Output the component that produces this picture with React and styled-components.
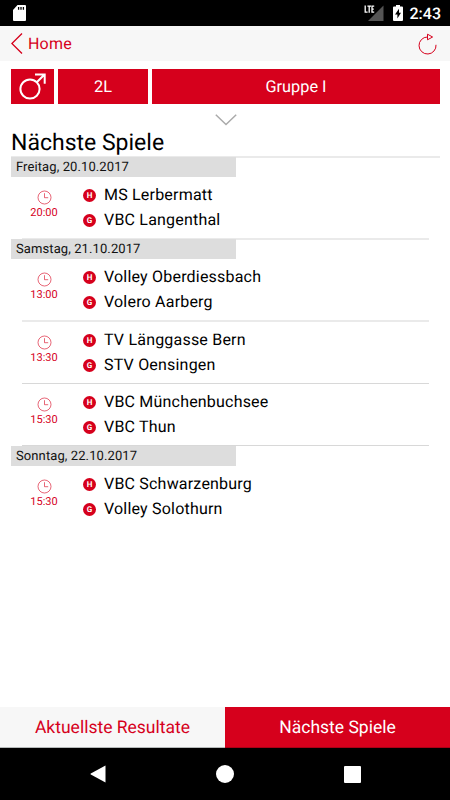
import React from "react";
import styled, { createGlobalStyle } from "styled-components";

const RED = "#d6001c";

const GlobalStyle = createGlobalStyle`
  * {
    box-sizing: border-box;
  }
  body {
    margin: 0;
    background: #fff;
    font-family: Roboto, sans-serif;
    text-rendering: geometricPrecision;
  }
`;

const Screen = styled.div`
  display: flex;
  flex-direction: column;
  width: 450px;
  height: 800px;
  overflow: hidden;
  color: #000;
  white-space: nowrap;
`;

const StatusBar = styled.div`
  display: flex;
  align-items: center;
  flex: none;
  height: 26px;
  padding: 0 9px 0 13px;
  background: #000;
  color: #fff;
  & .signal {
    margin-left: auto;
  }
  & .battery {
    margin: 0 7px 0 9px;
  }
  & .clock {
    font-size: 16px;
    font-weight: 500;
    line-height: 26px;
    padding-top: 2px;
  }
`;

const Header = styled.header`
  display: flex;
  align-items: center;
  justify-content: space-between;
  flex: none;
  height: 35px;
  padding: 0 12px 0 11px;
  background: #f7f7f7;
  color: ${RED};
`;

const BackLink = styled.div`
  display: flex;
  align-items: center;
  gap: 5px;
  font-size: 16px;
  letter-spacing: 0.2px;
`;

const Filters = styled.div`
  display: grid;
  grid-template-columns: 43px 90px 288px;
  gap: 4px;
  flex: none;
  height: 35px;
  margin: 8px 10px 0 11px;
`;

const FilterButton = styled.div`
  display: flex;
  align-items: center;
  justify-content: center;
  background: ${RED};
  color: #fff;
  font-size: 16.3px;
`;

const Expand = styled.div`
  display: flex;
  justify-content: center;
  flex: none;
  height: 24px;
  padding: 10px 0 0 1px;
`;

const Title = styled.h1`
  flex: none;
  height: 30px;
  margin: 0 10px 0 11px;
  border-bottom: 2px solid #eaeaea;
  font-size: 23px;
  font-weight: 400;
  line-height: 30px;
`;

const List = styled.main`
  flex: 1;
  padding: 0 11px;
`;

const DateBar = styled.div`
  position: relative;
  width: 225px;
  height: 20px;
  margin-top: ${({ $overlap }) => ($overlap ? -1 : 0)}px;
  padding-left: 5px;
  background: #ddd;
  color: #111;
  font-size: 13px;
  letter-spacing: 0.1px;
  line-height: 21px;
`;

const Match = styled.div`
  display: flex;
  height: ${({ $line }) => 61 + $line}px;
  margin: 0 10px 0 11px;
  border-bottom: ${({ $line }) => $line}px solid ${({ $line }) => ($line === 1 ? "#d8d8d8" : "#eaeaea")};
`;

const Kickoff = styled.div`
  display: flex;
  flex-direction: column;
  align-items: center;
  width: 44px;
  padding-top: 13px;
  color: ${RED};
  font-size: 11px;
  line-height: 14px;
  & svg {
    margin-bottom: 1px;
  }
`;

const Teams = styled.div`
  padding: 5px 0 0 17px;
`;

const Team = styled.div`
  display: flex;
  align-items: center;
  height: 25.3px;
  font-size: 16px;
  letter-spacing: 0.2px;
`;

const Badge = styled.span`
  display: flex;
  align-items: center;
  justify-content: center;
  width: 13px;
  height: 13px;
  margin: 1px 8px 0 0;
  border-radius: 50%;
  background: ${RED};
  color: #fff;
  font-size: 8px;
  font-weight: 700;
  letter-spacing: 0;
  line-height: 13px;
`;

const Tabs = styled.nav`
  display: grid;
  grid-template-columns: 1fr 1fr;
  flex: none;
  height: 41px;
`;

const Tab = styled.div`
  display: flex;
  align-items: center;
  justify-content: center;
  padding-top: 1px;
  background: ${({ $active }) => ($active ? RED : "#f7f7f7")};
  border-bottom: 1px solid ${({ $active }) => ($active ? "#a80016" : "#b5b9b9")};
  color: ${({ $active }) => ($active ? "#fff" : RED)};
  font-size: 17.5px;
`;

const SystemNav = styled.div`
  display: grid;
  grid-template-columns: 127px 127px 127px;
  justify-content: center;
  justify-items: center;
  align-items: center;
  flex: none;
  height: 52px;
  background: #000;
`;

const days = [
  {
    date: "Freitag, 20.10.2017",
    overlap: true,
    matches: [{ time: "20:00", home: "MS Lerbermatt", guest: "VBC Langenthal", line: 2 }],
  },
  {
    date: "Samstag, 21.10.2017",
    overlap: true,
    matches: [
      { time: "13:00", home: "Volley Oberdiessbach", guest: "Volero Aarberg", line: 2 },
      { time: "13:30", home: "TV Länggasse Bern", guest: "STV Oensingen", line: 1 },
      { time: "15:30", home: "VBC Münchenbuchsee", guest: "VBC Thun", line: 1 },
    ],
  },
  {
    date: "Sonntag, 22.10.2017",
    matches: [{ time: "15:30", home: "VBC Schwarzenburg", guest: "Volley Solothurn", line: 0 }],
  },
];

function ClockIcon() {
  return (
    <svg width="15" height="15" viewBox="0 0 15 15" fill="none" stroke={RED} strokeWidth="0.6">
      <circle cx="7.5" cy="7.5" r="6.5" />
      <path d="M7.5 3.2V7.7H11.2" />
    </svg>
  );
}

function MatchRow({ match }) {
  return (
    <Match $line={match.line}>
      <Kickoff>
        <ClockIcon />
        {match.time}
      </Kickoff>
      <Teams>
        <Team>
          <Badge>H</Badge>
          {match.home}
        </Team>
        <Team>
          <Badge>G</Badge>
          {match.guest}
        </Team>
      </Teams>
    </Match>
  );
}

export default function App() {
  return (
    <>
      <GlobalStyle />
      <Screen>
        <StatusBar>
          <svg width="13" height="16" viewBox="0 0 13 16">
            <path d="M4.5 0H12Q13 0 13 1V15Q13 16 12 16H1Q0 16 0 15V5Z" fill="#fff" />
            <path d="M5.6 2V4.8M8 2V4.8M10.4 2V4.8" stroke="#000" strokeWidth="1.3" />
          </svg>
          <svg className="signal" width="20" height="16" viewBox="0 0 20 16">
            <path d="M4 16L19.5 0.5V16Z" fill="#555" />
            <path d="M0 0H10.5V8.4H0Z" fill="#000" />
            <path
              d="M1.2 0.5V7.2H3.6M3.4 1.1H7M5.2 1V7.8M10.2 1.1H8V7.2H10.2M8 4.1H9.8"
              fill="none"
              stroke="#fff"
              strokeWidth="1.3"
            />
          </svg>
          <svg className="battery" width="10" height="16" viewBox="0 0 10 16">
            <path d="M3 0H7V1.6H9Q10 1.6 10 2.6V15Q10 16 9 16H1Q0 16 0 15V2.6Q0 1.6 1 1.6H3Z" fill="#fff" />
            <path d="M6 3.8L2 9.4H4.4V13.4L8 7.8H6Z" fill="#000" />
          </svg>
          <span className="clock">2:43</span>
        </StatusBar>
        <Header>
          <BackLink>
            <svg width="12" height="21" viewBox="0 0 12 21" fill="none" stroke={RED} strokeWidth="1.3">
              <path d="M11 0.5L0.9 10.5L11 20.5" />
            </svg>
            Home
          </BackLink>
          <svg width="20" height="22" viewBox="0 0 20 22" fill="none" stroke={RED} strokeWidth="1">
            <path d="M18 11.8A8.5 8.5 0 1 1 9.5 4" />
            <path d="M9.5 1.2V6.8L14.6 4Z" />
          </svg>
        </Header>
        <Filters>
          <FilterButton>
            <svg width="27" height="27" viewBox="0 0 27 27" fill="none" stroke="#fff" strokeWidth="2">
              <circle cx="11" cy="16" r="9.6" />
              <path d="M17.8 9.2L25.5 1.5M16 1.5H25.7V10.8" />
            </svg>
          </FilterButton>
          <FilterButton>2L</FilterButton>
          <FilterButton>Gruppe I</FilterButton>
        </Filters>
        <Expand>
          <svg width="22" height="12" viewBox="0 0 22 12" fill="none" stroke="#aaa" strokeWidth="1.5">
            <path d="M0.8 0.8L11 10.5L21.2 0.8" />
          </svg>
        </Expand>
        <Title>Nächste Spiele</Title>
        <List>
          {days.map((day) => (
            <section key={day.date}>
              <DateBar $overlap={day.overlap}>{day.date}</DateBar>
              {day.matches.map((match) => (
                <MatchRow key={match.home} match={match} />
              ))}
            </section>
          ))}
        </List>
        <Tabs>
          <Tab>Aktuellste Resultate</Tab>
          <Tab $active>Nächste Spiele</Tab>
        </Tabs>
        <SystemNav>
          <svg width="16" height="18" viewBox="0 0 16 18">
            <path d="M15.5 0.5V17.5L0.8 9.6Q0 9 0.8 8.4Z" fill="#fff" />
          </svg>
          <svg width="18" height="18" viewBox="0 0 18 18">
            <circle cx="9" cy="9" r="9" fill="#fff" />
          </svg>
          <svg width="17" height="17" viewBox="0 0 17 17">
            <rect width="17" height="17" rx="1" fill="#fff" />
          </svg>
        </SystemNav>
      </Screen>
    </>
  );
}
